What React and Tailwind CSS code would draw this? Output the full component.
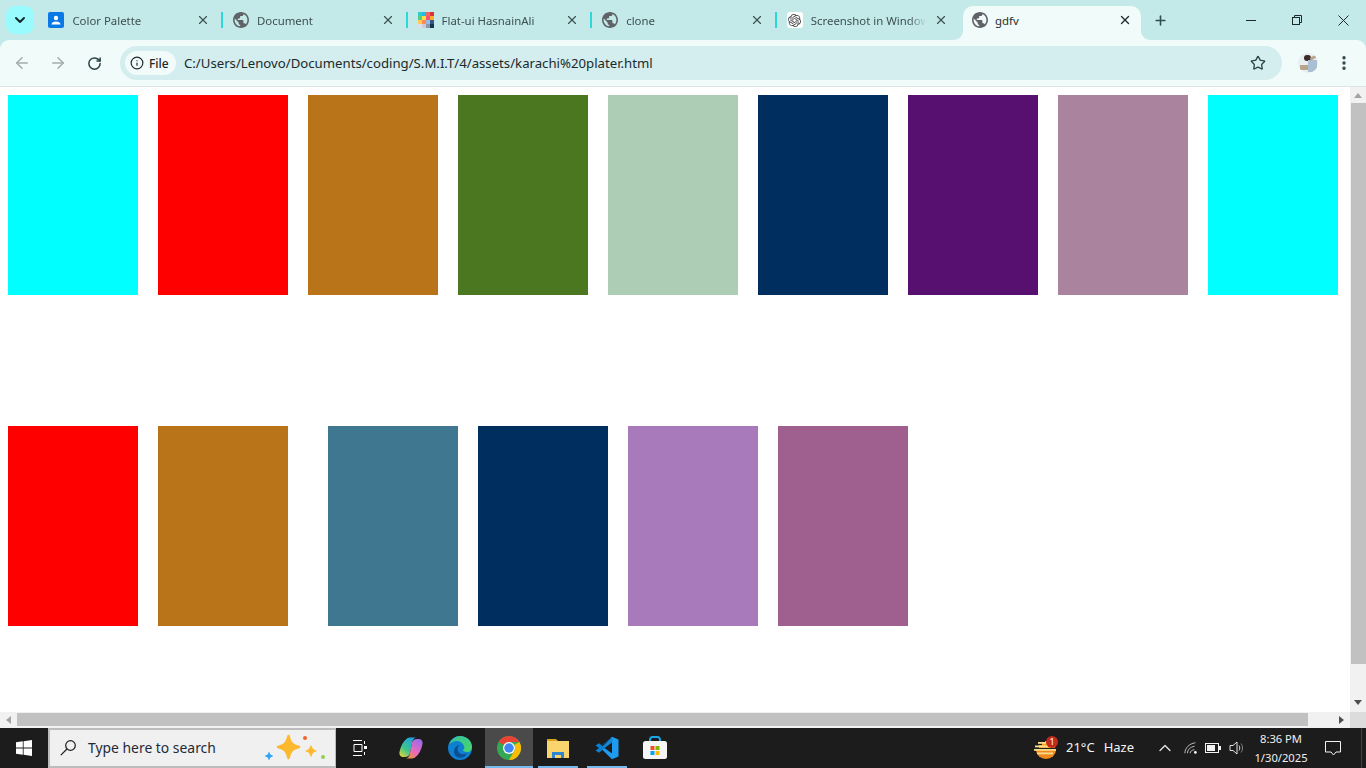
import React from 'react';
import { X, Plus, ArrowLeft, ArrowRight, RotateCw, Star, ChevronDown, ChevronUp, Info, EllipsisVertical } from 'lucide-react';
import { SiOpenai } from 'react-icons/si';

const GLOBE = 'M12 2C6.48 2 2 6.48 2 12s4.48 10 10 10 10-4.48 10-10S17.52 2 12 2zm-1 17.93c-3.95-.49-7-3.85-7-7.93 0-.62.08-1.21.21-1.79L9 15v1c0 1.1.9 2 2 2v1.93zm6.9-2.54c-.26-.81-1-1.39-1.9-1.39h-1v-3c0-.55-.45-1-1-1H8v-2h2c.55 0 1-.45 1-1V7h2c1.1 0 2-.9 2-2v-.41c2.93 1.19 5 4.06 5 7.41 0 2.08-.8 3.97-2.1 5.39z';

const Globe = () => (
  <svg viewBox="2 2 20 20" className="w-4 h-4 shrink-0" fill="#5f6368">
    <path d={GLOBE} />
  </svg>
);

const ContactsIcon = () => (
  <svg viewBox="0 0 16 16" className="w-4 h-4 shrink-0">
    <rect width="16" height="16" rx="2" fill="#0b78e6" />
    <circle cx="8" cy="6" r="2.2" fill="#fff" />
    <path d="M3.5 12.5c0-2 2.2-3 4.5-3s4.500 1 4.500 3z" fill="#fff" />
  </svg>
);

const PIXELS = [
  '#3cc', '#2bd', '#e66', '#d33',
  '#5c8', '#fd4', '#e57', '#fa3',
  '#fc5', '#f85', '#9bd', '#358',
  '#dde', '#ccd', '#89a', '#135',
];

const FlatIcon = () => (
  <div className="w-4 h-4 shrink-0 grid grid-cols-4 grid-rows-4">
    {PIXELS.map((c, i) => <span key={i} style={{ backgroundColor: c }} />)}
  </div>
);

const GptIcon = () => (
  <div className="w-4 h-4 shrink-0 bg-white rounded-[3px] flex items-center justify-center">
    <SiOpenai className="w-[13px] h-[13px] text-[#444]" />
  </div>
);

const tabs = [
  { title: 'Color Palette', icon: <ContactsIcon />, sep: true },
  { title: 'Document', icon: <Globe />, sep: true },
  { title: 'Flat-ui HasnainAli', icon: <FlatIcon />, sep: true },
  { title: 'clone', icon: <Globe />, sep: true },
  { title: 'Screenshot in Window', icon: <GptIcon />, sep: false },
];

const Tab = ({ title, icon, sep }) => (
  <div className="w-[184.6px] h-[40px] shrink-0 flex items-center pl-[11px] pr-[12px] relative">
    {icon}
    <span className="ml-2 pt-px w-[115px] whitespace-nowrap text-[11.4px] text-[#3d5052] [mask-image:linear-gradient(to_right,black_85%,transparent)]">{title}</span>
    <X className="ml-auto w-[14px] h-[14px] text-[#3d5052]" strokeWidth={2} />
    {sep && <span className="absolute right-[-1px] top-[12px] h-4 w-[2px] bg-[#2fd6dc]" />}
  </div>
);

const ActiveTab = () => (
  <div className="w-[178px] h-[34px] mt-[6px] ml-[2.6px] shrink-0 bg-[#f1fbfa] rounded-t-[10px] flex items-center pl-[9px] pr-[9px] pb-[6px] relative">
    <Globe />
    <span className="ml-[7px] pt-px text-[11.4px] text-[#1f2d2e]">gdfv</span>
    <X className="ml-auto w-[14px] h-[14px] text-[#1f2d2e]" strokeWidth={2.4} />
    <svg viewBox="0 0 10 10" className="absolute bottom-0 left-[-10px] w-[10px] h-[10px]">
      <path d="M10 0v10H0c6 0 10-4 10-10z" fill="#f1fbfa" />
    </svg>
    <svg viewBox="0 0 10 10" className="absolute bottom-0 right-[-10px] w-[10px] h-[10px]">
      <path d="M0 0v10h10C4 10 0 6 0 0z" fill="#f1fbfa" />
    </svg>
  </div>
);

const row1 = ['#00ffff', '#ff0000', '#b9741a', '#4a7720', '#adcdb5', '#002f5f', '#581070', '#aa849f', '#00ffff'];
const row2a = ['#ff0000', '#b9741a'];
const row2b = ['#3f7690', '#002f5f', '#a87abc', '#9f608f'];

const Swatch = ({ color }) => (
  <div className="w-[130px] h-[200px] shrink-0" style={{ backgroundColor: color }} />
);

const TriUp = () => <div className="w-0 h-0 border-x-[4px] border-x-transparent border-b-[5px] border-b-[#a3a3a3]" />;
const TriDown = () => <div className="w-0 h-0 border-x-[4px] border-x-transparent border-t-[5px] border-t-[#505050]" />;
const TriLeft = () => <div className="w-0 h-0 border-y-[4px] border-y-transparent border-r-[5px] border-r-[#a3a3a3]" />;
const TriRight = () => <div className="w-0 h-0 border-y-[4px] border-y-transparent border-l-[5px] border-l-[#505050]" />;

const ChromeIcon = () => (
  <svg viewBox="0 0 48 48" className="w-6 h-6">
    <circle cx="24" cy="24" r="24" fill="#34a853" />
    <path d="M24 0a24 24 0 0 1 20.8 12H24a12 12 0 0 0-10.4 6L3.2 12A24 24 0 0 1 24 0z" fill="#ea4335" />
    <path d="M44.8 12A24 24 0 0 1 24 48l10.4-18A12 12 0 0 0 34.4 18z" fill="#fbbc04" />
    <circle cx="24" cy="24" r="12" fill="#fff" />
    <circle cx="24" cy="24" r="9.5" fill="#4285f4" />
  </svg>
);

const CopilotIcon = () => (
  <svg viewBox="0 0 24 24" className="w-6 h-6">
    <defs>
      <linearGradient id="cpA" x1="0.8" y1="0" x2="0.1" y2="1">
        <stop offset="0" stopColor="#1fa3e8" />
        <stop offset="0.6" stopColor="#3bc48c" />
        <stop offset="1" stopColor="#e8d53a" />
      </linearGradient>
      <linearGradient id="cpB" x1="0.8" y1="0" x2="0.2" y2="1">
        <stop offset="0" stopColor="#9a6ae8" />
        <stop offset="0.6" stopColor="#e86ac0" />
        <stop offset="1" stopColor="#f09040" />
      </linearGradient>
    </defs>
    <path d="M8 2.500C9 1.800 10.500 1.500 12 1.500h5c-2 .5-3 2-3.500 3.500L11 17c-.5 2.500-2.500 4-5 4H4C1.500 21 0 18.500.5 16 1.500 10.500 4 5.500 8 2.500z" fill="url(#cpA)" />
    <path d="M16 21.500c-1 .7-2.500 1-4 1H7c2-.5 3-2 3.500-3.500L13 7c.5-2.500 2.500-4 5-4h2c2.500 0 4 2.500 3.500 5-1 5.500-3.500 10.500-7.500 13.500z" fill="url(#cpB)" />
  </svg>
);

const EdgeIcon = () => (
  <svg viewBox="0 0 24 24" className="w-6 h-6">
    <defs>
      <linearGradient id="edA" x1="0" y1="0" x2="1" y2="1">
        <stop offset="0" stopColor="#35c1a0" />
        <stop offset="1" stopColor="#4bd66c" />
      </linearGradient>
    </defs>
    <circle cx="12" cy="12" r="12" fill="#0f7fcf" />
    <path d="M1 9C3 3 8 0 12 0c7 0 12 5 12 11 0 3-2 5-5 5-2 0-4-1-4-2 1-1 2-2 1-4-1-3-4-5-7-5S2 7 1 9z" fill="url(#edA)" />
    <path d="M9 21c-3-2-4-6-2-9 1-2 3-3 5-3-2 1-3 3-2 6 1 2 3 4 7 3l2-.5c-2 4-6 5-10 3.500z" fill="#0b4f96" />
  </svg>
);

const ExplorerIcon = () => (
  <svg viewBox="0 0 24 24" className="w-6 h-6">
    <path d="M1 3h9l2 2h10v3H1z" fill="#d9a520" />
    <rect x="1" y="5" width="22" height="17" fill="#fad56d" />
    <path d="M6 22v-6h12v6h-3v-3H9v3z" fill="#2f86d0" />
  </svg>
);

const VsCodeIcon = () => (
  <svg viewBox="0 0 24 24" className="w-6 h-6">
    <path d="M17 .8 23.500 3.500v17L17 23.200 6 12.500z" fill="#1f9cf0" />
    <path d="M17 .8 17.500 7 9.500 12.500 6 9z" fill="#0065a9" opacity="0.35" />
    <path d="M17 6.500v11L9.500 12z" fill="#1c1c1c" />
    <path d="M4 7.200.5 9.500 4 12 .5 14.500 4 16.800 10 12z" fill="#0c7fd0" />
  </svg>
);

const StoreIcon = () => (
  <svg viewBox="0 0 24 24" className="w-6 h-6">
    <path d="M7 6V3.500A2.500 2.500 0 0 1 9.500 1h5A2.500 2.500 0 0 1 17 3.500V6" stroke="#19a7e8" strokeWidth="2" fill="none" />
    <rect x="0" y="5" width="24" height="18" rx="2.500" fill="#f5f5f5" />
    <rect x="7.500" y="10" width="4" height="4" fill="#f25022" />
    <rect x="12.500" y="10" width="4" height="4" fill="#7fba00" />
    <rect x="7.500" y="15" width="4" height="4" fill="#00a4ef" />
    <rect x="12.500" y="15" width="4" height="4" fill="#ffb900" />
  </svg>
);

const Sparkles = () => (
  <svg viewBox="0 0 62 30" className="w-[62px] h-[30px]">
    <path d="M24.500 3c1.500 7 4 9.500 10.500 11-6.500 1.500-9 4-10.500 11-1.500-7-4-9.500-10.500-11 6.500-1.500 9-4 10.500-11z" fill="#fdb92e" stroke="#fdb92e" strokeWidth="2.500" strokeLinejoin="round" />
    <path d="M47 13c.7 3.200 1.800 4.300 5 5-3.200.7-4.300 1.800-5 5-.7-3.200-1.800-4.300-5-5 3.200-.7 4.300-1.800 5-5z" fill="#fdb92e" stroke="#fdb92e" strokeWidth="1.200" strokeLinejoin="round" />
    <path d="M5 19.500c.4 2 1.200 2.800 3.500 3.500-2.300.7-3.100 1.500-3.500 3.500-.4-2-1.200-2.800-3.500-3.500 2.300-.7 3.100-1.500 3.500-3.500z" fill="#2aa4f4" stroke="#2aa4f4" strokeWidth="1" strokeLinejoin="round" />
    <circle cx="41" cy="5" r="2" fill="#f0642c" />
    <circle cx="59" cy="24" r="2" fill="#8fd14f" />
  </svg>
);

const TaskBtn = ({ children, active, open }) => (
  <div className={`h-10 w-12 shrink-0 flex items-center justify-center relative ${active ? 'bg-[#4a4a4a]' : ''}`}>
    {children}
    {(active || open) && (
      <span className={`absolute bottom-0 h-[2px] bg-[#76b9ed] ${active ? 'inset-x-0' : 'left-1 right-1'}`} />
    )}
  </div>
);

const WeatherIcon = () => (
  <div className="relative w-6 h-6">
    <svg viewBox="0 0 24 24" className="w-6 h-6">
      <path d="M3 14h20a10 9 0 0 1-20 0z" fill="#f08a1d" />
      <path d="M12 5a9 9 0 0 1 10 7H6V9h3V7h3z" fill="#f5a623" />
      <rect x="5" y="6" width="8" height="1.800" fill="#f8dc8c" />
      <rect x="2" y="9.500" width="14" height="1.800" fill="#f8dc8c" />
      <rect x="1" y="13" width="22" height="1.800" fill="#f8dc8c" />
      <rect x="4" y="16.500" width="16" height="1.800" fill="#f8dc8c" />
    </svg>
    <span className="absolute top-0 left-[13px] w-[12px] h-[12px] rounded-full bg-[#c42b1c] text-white text-[9px] leading-[12px] text-center">1</span>
  </div>
);

export default function App() {
  return (
    <div className="w-[1366px] h-screen flex flex-col overflow-hidden bg-white font-['Noto_Sans','Open_Sans',sans-serif]">
      {/* Tab strip */}
      <div className="h-10 shrink-0 bg-[#c3e9e8] flex relative">
        <div className="w-[37.4px] shrink-0 flex items-start pl-[6px] pt-[6px]">
          <div className="w-7 h-7 rounded-[9px] bg-[#99fbfd] flex items-center justify-center">
            <ChevronDown className="w-4 h-4 text-[#16292b]" strokeWidth={3} />
          </div>
        </div>
        {tabs.map((t) => <Tab key={t.title} {...t} />)}
        <ActiveTab />
        <div className="w-9 ml-[2px] shrink-0 flex items-center justify-center">
          <Plus className="w-[15px] h-[15px] text-[#2e5052]" strokeWidth={2.5} />
        </div>
        <div className="ml-auto flex text-[#1c2b2c]">
          <div className="w-[46px] flex items-center justify-center"><div className="w-[10px] h-px bg-[#1c2b2c]" /></div>
          <div className="w-[46px] flex items-center justify-center">
            <svg viewBox="0 0 10 10" className="w-[10px] h-[10px]" fill="none" stroke="currentColor" strokeWidth="1">
              <rect x="0.500" y="2.500" width="7" height="7" />
              <path d="M2.500 2.500V.5h7v7h-2" />
            </svg>
          </div>
          <div className="w-[46px] flex items-center justify-center">
            <svg viewBox="0 0 11 11" className="w-[11px] h-[11px]" fill="none" stroke="currentColor" strokeWidth="1">
              <path d="M.5.5l10 10M10.500.5l-10 10" />
            </svg>
          </div>
        </div>
      </div>

      {/* Toolbar */}
      <div className="h-[47px] shrink-0 bg-[#c3e9e8]">
        <div className="h-full bg-[#f1fbfa] rounded-t-[9px] border-b border-[#d9e5e7] flex items-center pl-[13px]">
          <ArrowLeft className="w-[18px] h-[18px] text-[#a3adae]" strokeWidth={2} />
          <ArrowRight className="w-[18px] h-[18px] ml-[18px] text-[#a3adae]" strokeWidth={2} />
          <RotateCw className="w-[15px] h-[15px] ml-[20px] text-[#2c4446]" strokeWidth={2.4} />
          <div className="ml-[18px] w-[1162px] h-[34px] rounded-full bg-[#d4edee] flex items-center pl-[5px] pr-[16px]">
            <div className="h-6 w-[51px] rounded-full bg-[#f1fbfa] flex items-center pl-[5px] gap-[5px] text-[#1b2a2b]">
              <Info className="w-[14px] h-[14px]" strokeWidth={2} />
              <span className="pt-px text-xs font-medium">File</span>
            </div>
            <span className="ml-2 pt-px text-[13.2px] text-[#1b2a2b] whitespace-nowrap">C:/Users/Lenovo/Documents/coding/S.M.I.T/4/assets/karachi%20plater.html</span>
            <Star className="ml-auto w-4 h-4 text-[#2c4446]" strokeWidth={2} />
          </div>
          <div className="ml-[16px] w-5 h-5 rounded-full bg-[#e9eef0] relative overflow-hidden shrink-0">
            <span className="absolute left-[6px] top-[2px] w-[7px] h-[6px] rounded-full bg-[#3a2a28]" />
            <span className="absolute left-[10px] top-[7px] w-[9px] h-[12px] bg-[#a9bfd4]" />
            <span className="absolute left-[2px] top-[12px] w-[8px] h-[5px] bg-[#b9a48c]" />
            <span className="absolute left-[12px] top-[3px] w-[7px] h-[3px] -rotate-[30deg] bg-[#b9a48c]" />
          </div>
          <EllipsisVertical className="ml-[17px] w-[18px] h-[18px] text-[#2c4446]" strokeWidth={2.5} />
        </div>
      </div>

      {/* Page + vertical scrollbar */}
      <div className="flex-1 min-h-0 flex">
        <div className="flex-1 min-w-0 overflow-hidden pl-2 pt-2 bg-white">
          <div className="flex gap-5">
            {row1.map((c, i) => <Swatch key={i} color={c} />)}
          </div>
          <div className="flex gap-5 mt-[131px]">
            {row2a.map((c, i) => <Swatch key={i} color={c} />)}
            <div className="flex gap-5 ml-5">
              {row2b.map((c, i) => <Swatch key={i} color={c} />)}
            </div>
          </div>
        </div>
        <div className="w-4 shrink-0 bg-[#f1f1f1] flex flex-col items-end">
          <div className="w-[15px] h-4 pr-[2px] flex items-center justify-center"><TriUp /></div>
          <div className="w-[15px] h-[561px] bg-[#c1c1c1]" />
          <div className="w-[15px] mt-auto h-4 pr-[2px] pb-1 flex items-center justify-center"><TriDown /></div>
        </div>
      </div>

      {/* Horizontal scrollbar */}
      <div className="h-4 shrink-0 flex bg-[#f1f1f1]">
        <div className="w-[17px] flex items-center justify-center"><TriLeft /></div>
        <div className="w-[1291px] h-[13px] mt-px bg-[#c1c1c1]" />
        <div className="w-[42px] pr-[6px] flex items-center justify-end"><TriRight /></div>
        <div className="w-4 bg-[#dcdcdc]" />
      </div>

      {/* Taskbar */}
      <div className="h-10 shrink-0 bg-[#1c1c1c] flex items-center text-white">
        <div className="w-12 shrink-0 flex items-center justify-center">
          <svg viewBox="0 0 16 16" className="w-4 h-4" fill="#fff">
            <path d="M0 2.300 6.800 1.300V7.600H0zM7.600 1.200 16 0V7.600H7.600zM0 8.400H6.800V14.700L0 13.700zM7.600 8.400H16V16L7.600 14.800z" />
          </svg>
        </div>
        <div className="w-[288px] h-10 shrink-0 bg-[#f0f0f0] border-2 border-[#bcbcbc] border-r-[1px] flex items-center pl-[10px] relative">
          <svg viewBox="0 0 16 16" className="w-4 h-4" fill="none" stroke="#1c1c1c" strokeWidth="1.200">
            <circle cx="10.500" cy="5.500" r="4.800" />
            <path d="M.8 15.200 7 9" />
          </svg>
          <span className="ml-3 text-[13.9px] text-[#1f2937]">Type here to search</span>
          <div className="absolute right-[9px] top-[3px]"><Sparkles /></div>
        </div>
        <TaskBtn>
          <svg viewBox="0 0 16 16" className="w-4 h-4" fill="none" stroke="#fff" strokeWidth="1">
            <path d="M1 .5h9M1 15.500h9M2 4.500h8v7H2zM12.500 1v3M12.500 12v3" />
            <rect x="12" y="6" width="3" height="3" fill="#fff" stroke="none" />
          </svg>
        </TaskBtn>
        <div className="w-[3px] shrink-0" />
        <div className="flex gap-px">
          <TaskBtn><CopilotIcon /></TaskBtn>
          <TaskBtn><EdgeIcon /></TaskBtn>
          <TaskBtn active><ChromeIcon /></TaskBtn>
          <TaskBtn open><ExplorerIcon /></TaskBtn>
          <TaskBtn open><VsCodeIcon /></TaskBtn>
        </div>
        <TaskBtn><StoreIcon /></TaskBtn>

        <div className="ml-auto flex items-center h-10">
          <WeatherIcon />
          <span className="ml-[9px] text-[13px] text-[#f3f3f3]">21°C</span>
          <span className="ml-[9px] text-[13px] text-[#f3f3f3]">Haze</span>
          <ChevronUp className="ml-[21px] w-5 h-5 text-[#e8e8e8]" strokeWidth={1.5} />
          <svg viewBox="0 0 16 16" className="ml-[9px] w-[14px] h-[14px]" fill="none" stroke="#cfcfcf" strokeWidth="1">
            <path d="M1 14C1 8 6 3 13 2M4 14c0-4 3-7 8-8M7 14c0-2 2-4 5-4" />
            <circle cx="13" cy="13" r="1.500" fill="#fff" stroke="none" />
          </svg>
          <svg viewBox="0 0 16 10" className="ml-[7px] w-[16px] h-[10px]" fill="none" stroke="#f2f2f2" strokeWidth="1">
            <rect x="0.500" y="0.500" width="13" height="9" />
            <rect x="2" y="2" width="8" height="6" fill="#f2f2f2" stroke="none" />
            <rect x="14" y="3" width="2" height="4" fill="#f2f2f2" stroke="none" />
          </svg>
          <svg viewBox="0 0 16 16" className="ml-[8px] w-[16px] h-[16px]" fill="none" stroke="#e4e4e4" strokeWidth="1">
            <path d="M1 5.500h3L8 2v12l-4-3.500H1z" />
            <path d="M10 5.500c1 1.500 1 3.500 0 5" />
            <path d="M12 3.500c2 2.500 2 6.500 0 9" stroke="#8a8a8a" />
          </svg>
          <div className="ml-[10px] w-[52px] flex flex-col items-center text-[11.2px] leading-[19px] text-[#efefef] whitespace-nowrap">
            <span>8:36 PM</span>
            <span>1/30/2025</span>
          </div>
          <div className="ml-[4px] w-[44px] flex items-center justify-center">
            <svg viewBox="0 0 16 15" className="w-4 h-[15px]" fill="none" stroke="#f2f2f2" strokeWidth="1">
              <path d="M.5.5h15v10.500H11l-2.500 3-2.500-3H.5z" />
            </svg>
          </div>
          <div className="ml-[6px] mr-1 w-px h-10 bg-[#444]" />
        </div>
      </div>
    </div>
  );
}
